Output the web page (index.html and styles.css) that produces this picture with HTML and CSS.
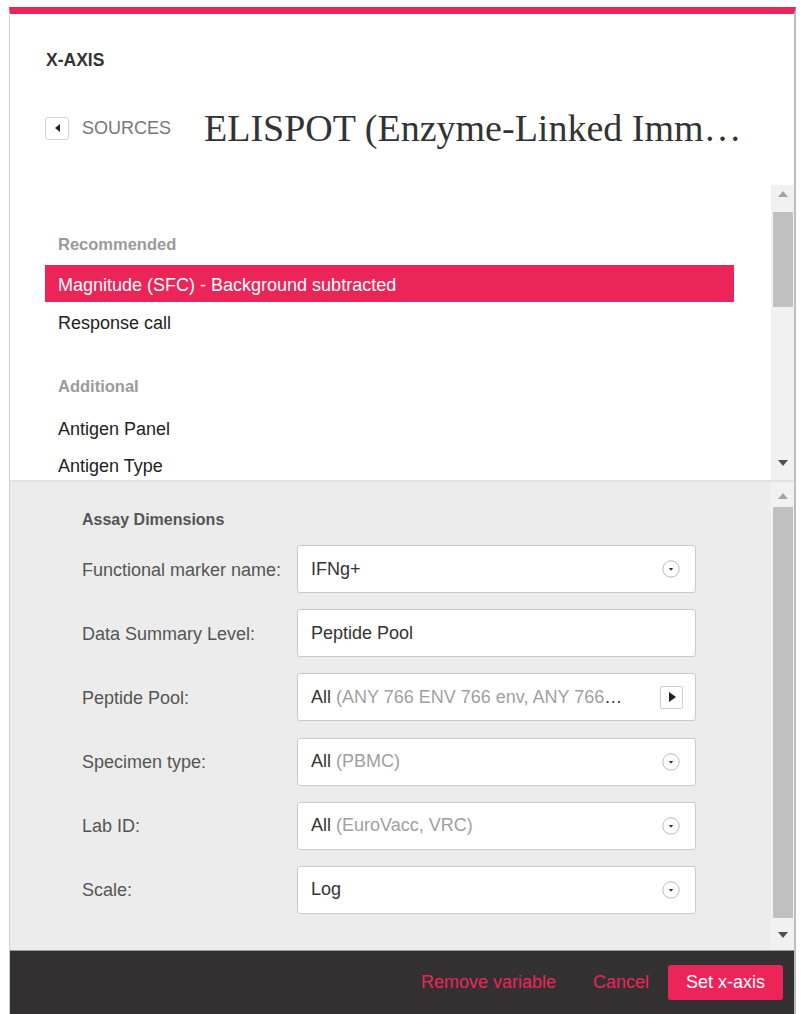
FILE: index.html
```html
<!DOCTYPE html>
<html>
<head>
<meta charset="utf-8">
<link rel="stylesheet" href="styles.css">
</head>
<body>
<div class="modal">
  <header class="head">
    <div class="kicker">X-AXIS</div>
    <div class="crumb">
      <span class="back"><span class="tri-left"></span></span>
      <span class="sources">SOURCES</span>
      <h1 class="title">ELISPOT (Enzyme-Linked ImmunoSpot)</h1>
    </div>
  </header>

  <section class="listwrap">
    <div class="list">
      <div class="group">Recommended</div>
      <div class="item selected">Magnitude (SFC) - Background subtracted</div>
      <div class="item">Response call</div>
      <div class="group second">Additional</div>
      <div class="item">Antigen Panel</div>
      <div class="item last">Antigen Type</div>
    </div>
    <div class="sbar sbar-list">
      <div class="arrow"><span class="tri-up"></span></div>
      <div class="track"><div class="thumb thumb-list"></div></div>
      <div class="arrow"><span class="tri-down"></span></div>
    </div>
  </section>

  <section class="panelwrap">
    <div class="panel">
      <div class="panel-title">Assay Dimensions</div>
      <div class="form">
        <div class="label">Functional marker name:</div>
        <div class="field"><span class="val">IFNg+</span><span class="dd"><svg width="18" height="18" viewBox="0 0 18 18"><circle cx="9" cy="9" r="8.2" fill="#fff" stroke="#b9b9b9" stroke-width="1"/><path d="M6.8 7.9 L11.2 7.9 L9 10.7 Z" fill="#333"/></svg></span></div>

        <div class="label">Data Summary Level:</div>
        <div class="field"><span class="val">Peptide Pool</span></div>

        <div class="label">Peptide Pool:</div>
        <div class="field"><span class="val">All <span class="muted">(ANY 766 ENV 766 env, ANY 766 GAG 766 gag, ANY 766 POL 766 pol)</span></span><span class="sq"><span class="tri-right"></span></span></div>

        <div class="label">Specimen type:</div>
        <div class="field"><span class="val">All <span class="muted">(PBMC)</span></span><span class="dd"><svg width="18" height="18" viewBox="0 0 18 18"><circle cx="9" cy="9" r="8.2" fill="#fff" stroke="#b9b9b9" stroke-width="1"/><path d="M6.8 7.9 L11.2 7.9 L9 10.7 Z" fill="#333"/></svg></span></div>

        <div class="label">Lab ID:</div>
        <div class="field"><span class="val">All <span class="muted">(EuroVacc, VRC)</span></span><span class="dd"><svg width="18" height="18" viewBox="0 0 18 18"><circle cx="9" cy="9" r="8.2" fill="#fff" stroke="#b9b9b9" stroke-width="1"/><path d="M6.8 7.9 L11.2 7.9 L9 10.7 Z" fill="#333"/></svg></span></div>

        <div class="label">Scale:</div>
        <div class="field"><span class="val">Log</span><span class="dd"><svg width="18" height="18" viewBox="0 0 18 18"><circle cx="9" cy="9" r="8.2" fill="#fff" stroke="#b9b9b9" stroke-width="1"/><path d="M6.8 7.9 L11.2 7.9 L9 10.7 Z" fill="#333"/></svg></span></div>
      </div>
    </div>
    <div class="sbar sbar-panel">
      <div class="arrow"><span class="tri-up"></span></div>
      <div class="track"><div class="thumb thumb-panel"></div></div>
      <div class="arrow"><span class="tri-down"></span></div>
    </div>
  </section>

  <footer class="foot">
    <span class="link remove">Remove variable</span>
    <span class="link cancel">Cancel</span>
    <span class="btn">Set x-axis</span>
  </footer>
</div>
</body>
</html>
```

FILE: styles.css
```css
* { box-sizing: border-box; }

html, body {
  margin: 0;
  padding: 0;
  background: #fff;
}

body {
  padding: 7px 6px 0 9px;
  font-family: "Liberation Sans", Arial, sans-serif;
  color: #333;
  height: 1014px;
  overflow: hidden;
}

.modal {
  width: 787px;
  border-top: 7px solid #ec2559;
  border-left: 1px solid #cfcfcf;
  border-right: 2px solid #bdbdbd;
  display: flex;
  flex-direction: column;
}

/* header */
.head {
  height: 171px;
  padding: 36px 0 0 35px;
}

.kicker {
  font-size: 17.5px;
  font-weight: bold;
  line-height: 20px;
  color: #333;
  margin-left: 1px;
}

.crumb {
  display: flex;
  align-items: center;
  height: 48px;
  margin-top: 34px;
}

.back {
  width: 24px;
  height: 23px;
  border: 1px solid #d4d4d4;
  border-radius: 3px;
  display: flex;
  align-items: center;
  justify-content: center;
  background: #fff;
}

.tri-left {
  width: 0;
  height: 0;
  border-top: 4px solid transparent;
  border-bottom: 4px solid transparent;
  border-right: 5px solid #222;
}

.sources {
  margin-left: 13px;
  font-size: 18px;
  color: #777;
}

.title {
  margin: 0 0 0 33px;
  width: 551px;
  font-family: "Liberation Serif", "Times New Roman", serif;
  font-weight: normal;
  font-size: 38px;
  color: #333;
  white-space: nowrap;
  overflow: hidden;
  text-overflow: ellipsis;
}

/* list */
.listwrap {
  height: 297px;
  display: flex;
  border-bottom: 2px solid #e2e2e2;
}

.list {
  flex: 1;
  overflow: hidden;
  padding: 48px 36px 0 35px;
}

.group {
  font-size: 16.5px;
  font-weight: bold;
  color: #9a9a9a;
  line-height: 22px;
  padding-left: 13px;
  margin-bottom: 10px;
}

.group.second {
  margin-top: 34px;
  margin-bottom: 12px;
}

.item {
  height: 38px;
  line-height: 40px;
  padding-left: 13px;
  font-size: 18px;
  color: #222;
}

.item.last {
  height: 33px;
  line-height: 38px;
}

.item.selected {
  background: #ec2559;
  color: #fff;
  height: 37px;
  line-height: 41px;
  margin-right: 1px;
  margin-bottom: 1px;
}

/* scrollbars */
.sbar {
  width: 23px;
  background: #f1f1f1;
  display: flex;
  flex-direction: column;
  align-items: center;
}

.sbar-list { padding-bottom: 8px; }
.sbar-panel { padding: 5px 0 6px; }

.arrow {
  height: 18px;
  width: 100%;
  display: flex;
  align-items: center;
  justify-content: center;
}

.track {
  flex: 1;
  width: 100%;
  display: flex;
  justify-content: center;
}

.thumb {
  width: 20px;
  background: #c1c1c1;
}

.thumb-list { margin-top: 9px; height: 95px; }
.thumb-panel { margin-top: 2px; height: 411px; }

.tri-up {
  width: 0;
  height: 0;
  border-left: 5px solid transparent;
  border-right: 5px solid transparent;
  border-bottom: 6px solid #a3a3a3;
}

.tri-down {
  width: 0;
  height: 0;
  border-left: 5px solid transparent;
  border-right: 5px solid transparent;
  border-top: 6px solid #505050;
}

/* panel */
.panelwrap {
  height: 469px;
  display: flex;
  background: #ececec;
  border-bottom: 1px solid #9a9a9a;
}

.panel {
  flex: 1;
  padding: 28px 0 0 72px;
}

.panel-title {
  font-size: 16px;
  font-weight: bold;
  color: #555;
  line-height: 20px;
  margin-bottom: 15px;
}

.form {
  display: grid;
  grid-template-columns: 215px 399px;
  grid-auto-rows: 48px;
  row-gap: 16.2px;
  align-items: center;
}

.label {
  font-size: 18px;
  color: #555;
  padding-top: 2px;
}

.field {
  height: 48px;
  background: #fff;
  border: 1px solid #cbcbcb;
  border-radius: 3px;
  display: flex;
  align-items: center;
  padding: 0 12px 0 13px;
  font-size: 18px;
  color: #333;
}

.val {
  flex: 1;
  min-width: 0;
  white-space: nowrap;
  overflow: hidden;
  text-overflow: ellipsis;
}

.muted { color: #a0a0a0; }

.dd {
  width: 18px;
  height: 18px;
  display: flex;
  margin-left: 10px;
  margin-right: 3px;
}

.sq {
  width: 23px;
  height: 23px;
  border: 1px solid #d0d0d0;
  border-radius: 2px;
  display: flex;
  align-items: center;
  justify-content: center;
  margin-left: 34px;
}

.tri-right {
  width: 0;
  height: 0;
  border-top: 5px solid transparent;
  border-bottom: 5px solid transparent;
  border-left: 7px solid #222;
  margin-left: 2px;
}

/* footer */
.foot {
  height: 63px;
  background: #333031;
  display: flex;
  align-items: center;
  justify-content: flex-end;
  padding-right: 11px;
}

.link {
  font-size: 18px;
  color: #ec2559;
}

.remove { margin-right: 37px; }
.cancel { margin-right: 19px; }

.btn {
  height: 35px;
  width: 115px;
  background: #ec2559;
  color: #fff;
  font-size: 18px;
  border-radius: 3px;
  display: flex;
  align-items: center;
  justify-content: center;
}
```
